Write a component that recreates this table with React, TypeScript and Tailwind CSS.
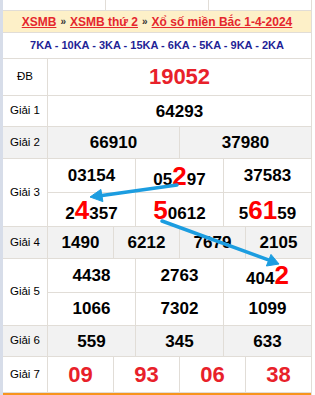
import React from "react";

const B = "border-[#e1ddd7]";
const RED = "text-[#e8212a]";

function Hi({ children }: { children: React.ReactNode }) {
  return <span className="text-[#ff0000] text-[26px]">{children}</span>;
}

function Cells({ items, red, h }: { items: React.ReactNode[]; red?: boolean; h?: string }) {
  return (
    <div className={`flex flex-1 ${h ?? ""}`}>
      {items.map((it, i) => (
        <div
          key={i}
          className={`flex-1 flex items-center justify-center ${i < items.length - 1 ? `border-r ${B}` : ""} ${
            red ? `${RED} text-[22px]` : "text-[17px] text-black"
          } font-bold leading-none`}
        >
          {it}
        </div>
      ))}
    </div>
  );
}

function Row({
  label,
  h,
  gray,
  children,
}: {
  label: string;
  h: string;
  gray?: boolean;
  children: React.ReactNode;
}) {
  return (
    <div className={`flex ${h} border-b ${B} ${gray ? "bg-[#f2f2f2]" : "bg-white"}`}>
      <div className={`w-[45px] shrink-0 border-r ${B} flex items-center justify-center text-[11.5px] text-black`}>
        {label}
      </div>
      <div className="flex-1 flex flex-col">{children}</div>
    </div>
  );
}

export default function App() {
  return (
    <div className="relative w-[315px] h-[395px] bg-white flex font-['Liberation_Sans',Arial,sans-serif] overflow-hidden">
      <div className="w-[3px] shrink-0 bg-[#d7dde9]" />
      <div className={`w-[309px] shrink-0 flex flex-col border-r ${B}`}>
        <div className={`flex h-[11px] shrink-0 border-b ${B}`}>
          <div className={`flex-1 border-r ${B}`} />
          <div className={`flex-1 border-r ${B}`} />
          <div className="flex-1" />
        </div>
        <div className={`h-[22px] shrink-0 border-b ${B} bg-[#fdf0c8] flex items-center justify-center text-[12px] font-bold leading-none`}>
          <span className="text-[#e5262d] underline">XSMB</span>
          <span className="text-[#333] text-[10px] mx-[4px]">»</span>
          <span className="text-[#e5262d] underline">XSMB thứ 2</span>
          <span className="text-[#333] text-[10px] mx-[4px]">»</span>
          <span className="text-[#e5262d] underline">Xổ số miền Bắc 1-4-2024</span>
        </div>
        <div className={`h-[26px] shrink-0 border-b ${B} flex items-center justify-center text-[11px] font-bold text-[#1f1f96]`}>
          7KA - 10KA - 3KA - 15KA - 6KA - 5KA - 9KA - 2KA
        </div>
        <Row label="ĐB" h="h-[37px] shrink-0">
          <Cells items={["19052"]} red />
        </Row>
        <Row label="Giải 1" h="h-[31px] shrink-0">
          <Cells items={["64293"]} />
        </Row>
        <Row label="Giải 2" h="h-[32px] shrink-0" gray>
          <Cells items={["66910", "37980"]} />
        </Row>
        <Row label="Giải 3" h="h-[68px] shrink-0">
          <div className={`flex flex-1 border-b ${B}`}>
            <Cells
              items={[
                "03154",
                <span key="b" className="flex items-baseline">
                  05<Hi>2</Hi>97
                </span>,
                "37583",
              ]}
            />
          </div>
          <Cells
            items={[
              <span key="a" className="flex items-baseline">
                2<Hi>4</Hi>357
              </span>,
              <span key="b" className="flex items-baseline">
                <Hi>5</Hi>0612
              </span>,
              <span key="c" className="flex items-baseline">
                5<Hi>61</Hi>59
              </span>,
            ]}
          />
        </Row>
        <Row label="Giải 4" h="h-[32px] shrink-0" gray>
          <Cells items={["1490", "6212", "7679", "2105"]} />
        </Row>
        <Row label="Giải 5" h="h-[67px] shrink-0">
          <div className={`flex flex-1 border-b ${B}`}>
            <Cells
              items={[
                "4438",
                "2763",
                <span key="c" className="flex items-baseline">
                  404<Hi>2</Hi>
                </span>,
              ]}
            />
          </div>
          <Cells items={["1066", "7302", "1099"]} />
        </Row>
        <Row label="Giải 6" h="h-[31px] shrink-0" gray>
          <Cells items={["559", "345", "633"]} />
        </Row>
        <Row label="Giải 7" h="h-[36px] shrink-0">
          <Cells items={["09", "93", "06", "38"]} red />
        </Row>
        <div className="h-[3px] shrink-0 bg-[#f7941d]" />
      </div>
      <div className="flex-1 bg-white" />
      <svg className="absolute inset-0 pointer-events-none" width="315" height="395" viewBox="0 0 315 395">
        <g fill="#1c9de0" stroke="#1c9de0">
          <line x1="177" y1="185" x2="102" y2="195.5" strokeWidth="3.5" strokeLinecap="round" />
          <polygon points="90,197 102.9,201.6 100.9,189.4" strokeWidth="1" strokeLinejoin="round" />
          <line x1="162" y1="221" x2="269" y2="260.2" strokeWidth="3.5" strokeLinecap="round" />
          <polygon points="279,264 266.4,266 271,254.4" strokeWidth="1" strokeLinejoin="round" />
        </g>
      </svg>
    </div>
  );
}
